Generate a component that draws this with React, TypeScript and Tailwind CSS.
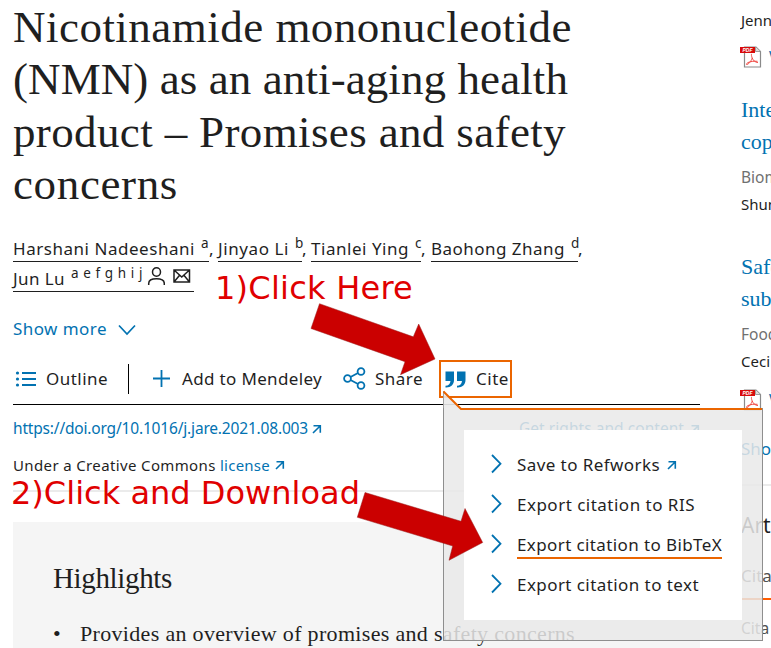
import { useLayoutEffect, useRef } from "react";
import type { ReactNode } from "react";

const SANS = "font-['Noto_Sans','Open_Sans',sans-serif]";
const SERIF = "font-['Liberation_Serif',serif]";

/** A run of text whose tracking is adjusted so that it fills a given measure. */
function Fit({ w, className = "", children }: { w: number; className?: string; children: string }) {
  const ref = useRef<HTMLSpanElement>(null);
  useLayoutEffect(() => {
    const el = ref.current;
    if (!el) return;
    el.style.letterSpacing = "0px";
    const natural = el.getBoundingClientRect().width;
    el.style.letterSpacing = `${(w - natural) / children.length}px`;
  }, [w, children]);
  return (
    <span ref={ref} className={`inline-block shrink-0 whitespace-pre ${className}`}>
      {children}
    </span>
  );
}

function ExternalArrow({ className = "" }: { className?: string }) {
  return (
    <svg className={`shrink-0 ${className}`} width="10" height="10" viewBox="0 0 10 10" fill="none" stroke="#0272b1" strokeWidth="1.6">
      <path d="M1.500 1.800H8.300V8.800M8.100 2L1 9" />
    </svg>
  );
}

function PdfIcon() {
  return (
    <svg className="-ml-px block shrink-0" width="22" height="22" viewBox="0 0 22 22">
      <path d="M4.5 1H16l4.5 4.5V21h-16z" fill="#fff" stroke="#8a8a8a" strokeWidth="1.2" />
      <path d="M15.5 1v4.5h5" fill="#ddd" stroke="#8a8a8a" strokeWidth=".8" />
      <path d="M12 8c-1 0-.6 2 .2 4 1 2.400 3 4.500 5.800 4.500M12.300 12C11 15.500 8 19 6.500 18.500 6 17 10 14.800 17.500 15.300" fill="none" stroke="#f04a44" strokeWidth="1" />
      <rect x="0" y="1" width="15" height="6" fill="#d80a0a" />
      <text x="7.5" y="6" textAnchor="middle" fill="#fff" className="font-['Liberation_Sans',sans-serif] text-[5px] font-bold italic">PDF</text>
    </svg>
  );
}

function Author({ name, w, sup, total, children }: { name: string; w: number; sup: string; total: string; children?: ReactNode }) {
  return (
    <span className={`flex h-[25px] shrink-0 border-b border-[#1f1f1f] ${total}`}>
      <Fit w={w}>{name}</Fit>
      <span className="ml-[6px] whitespace-pre text-[13.500px] leading-[12px]">{sup}</span>
      {children}
    </span>
  );
}

function ExportRow({ label, w, active, external }: { label: string; w: number; active?: boolean; external?: boolean }) {
  return (
    <li className="flex h-10 items-center">
      <svg className="shrink-0" width="11" height="20" viewBox="0 0 11 20" fill="none" stroke="#0272b1" strokeWidth="1.8">
        <path d="M1 1L9.500 9.700L1 18.500" />
      </svg>
      <span className={`ml-[15px] flex h-[29px] items-center ${active ? "border-b-2 border-[#eb6500] pt-[3px]" : "pt-[2px]"}`}>
        <Fit w={w}>{label}</Fit>
      </span>
      {external && <ExternalArrow className="ml-[7px] mt-[2px]" />}
    </li>
  );
}

function Article() {
  return (
    <main className="w-[687px] shrink-0 text-[17px] leading-6">
      <h1 className={`${SERIF} flex h-[210px] flex-col items-start pt-px text-[45px] leading-[52.400px]`}>
        <Fit w={559}>Nicotinamide mononucleotide</Fit>
        <Fit w={555}>(NMN) as an anti-aging health</Fit>
        <Fit w={553}>product – Promises and safety</Fit>
        <Fit w={165}>concerns</Fit>
      </h1>

      <div className="mt-[27px] flex">
        <Author name="Harshani Nadeeshani" w={182} sup="a" total="w-[196px]" />
        <span className="w-[9px]">,</span>
        <Author name="Jinyao Li" w={71} sup="b" total="w-[84px]" />
        <span className="w-[9px]">,</span>
        <Author name="Tianlei Ying" w={98} sup="c" total="w-[110px]" />
        <span className="w-[10px]">,</span>
        <Author name="Baohong Zhang" w={134} sup="d" total="w-[147px]" />
        <span>,</span>
      </div>
      <div className="mt-[5px] flex">
        <span className="flex h-[25px] w-[181px] border-b border-[#1f1f1f]">
          <Fit w={52}>Jun Lu</Fit>
          <Fit w={72} className="ml-[6px] text-[13.500px] leading-[12px]">a e f g h i j</Fit>
          <svg className="ml-[4px]" width="18" height="19" viewBox="0 0 18 19" fill="none" stroke="#1f1f1f" strokeWidth="1.500">
            <ellipse cx="9.500" cy="5" rx="4" ry="4.200" />
            <path d="M1.700 18v-1.500C1.700 13 5.500 11.800 9.500 11.800s7.800 1.200 7.800 4.700V18" />
          </svg>
          <svg className="ml-[8px] mt-[2px]" width="18" height="14" viewBox="0 0 18 14" fill="none" stroke="#1f1f1f" strokeWidth="1.500">
            <path d="M1 1h15.500v12H1zM1 1l7.750 7 7.750-7M1 13l5.600-6.800M16.500 13l-5.600-6.800" />
          </svg>
        </span>
      </div>

      <div className="mt-[25px] flex h-6 items-center text-[#0272b1]">
        <Fit w={94}>Show more</Fit>
        <svg className="ml-[11px] mt-px" width="18" height="12" viewBox="0 0 18 12" fill="none" stroke="currentColor" strokeWidth="1.700">
          <path d="M1 1.500L9 10l8-8.500" />
        </svg>
      </div>

      <div className="mt-[23px] flex h-[41px] border-b border-black">
        <div className="flex h-[30px] items-center">
          <svg className="ml-[2px]" width="22" height="16" viewBox="0 0 22 16" fill="#0272b1">
            <path d="M7 1h14v2H7zM7 7h14v2H7zM7 13h14v2H7z" />
            <circle cx="2.500" cy="2" r="1.600" />
            <circle cx="2.500" cy="8" r="1.600" />
            <circle cx="2.500" cy="14" r="1.600" />
          </svg>
          <Fit w={62} className="ml-[9px]">Outline</Fit>
          <span className="ml-5 h-[30px] w-px bg-black" />
          <svg className="ml-6" width="18" height="18" viewBox="0 0 18 18" stroke="#0272b1" strokeWidth="1.800">
            <path d="M0 8.500h17M8.500 0v17" />
          </svg>
          <Fit w={140} className="ml-[11px]">Add to Mendeley</Fit>
          <svg className="ml-[21px]" width="24" height="24" viewBox="0 0 24 24" fill="none" stroke="#0272b1" strokeWidth="1.800">
            <circle cx="4.500" cy="11.500" r="3.400" />
            <circle cx="18" cy="4.500" r="3.400" />
            <circle cx="18" cy="18.500" r="3.400" />
            <path d="M7.500 10l7.500-4M7.500 13l7.500 4" />
          </svg>
          <Fit w={48} className="ml-[8px]">Share</Fit>
          <div className="ml-4 flex h-[38px] w-[73px] shrink-0 items-center border-2 border-[#eb6500]">
            <svg className="ml-[4px]" width="21" height="17" viewBox="0 0 21 17" fill="#0272b1">
              <path d="M.5.500H9V9c0 4.500-3 7.500-7.800 7.500H.5v-1.800c3 0 4.700-1.600 5-4.700H.5zM12 .500h8.500V9c0 4.500-3 7.500-7.800 7.500H12v-1.800c3 0 4.700-1.600 5-4.700h-5z" />
            </svg>
            <Fit w={33} className="ml-[10px]">Cite</Fit>
          </div>
        </div>
      </div>

      <div className="mt-[11px] flex h-6 items-center justify-between text-[15.500px] text-[#0272b1]">
        <span className="flex items-center">
          <Fit w={295}>https://doi.org/10.1016/j.jare.2021.08.003</Fit>
          <ExternalArrow className="ml-[4px] mt-px" />
        </span>
        <span className="flex items-center">
          <Fit w={165}>Get rights and content</Fit>
          <ExternalArrow className="ml-[6px] mt-px" />
        </span>
      </div>
      <div className="mt-[13px] flex h-6 items-center text-[15px]">
        <Fit w={207}>Under a Creative Commons </Fit>
        <Fit w={50} className="text-[#0272b1]">license</Fit>
        <ExternalArrow className="ml-[5px]" />
      </div>
      <hr className="mt-[13px] h-[2px] border-0 bg-[#ebebeb]" />

      <section className={`${SERIF} mt-[30px] h-[150px] bg-[#f5f5f5] px-10 pt-[38px]`}>
        <h2 className="h-9 text-[29px] leading-9">
          <Fit w={119}>Highlights</Fit>
        </h2>
        <div className="mt-[22px] flex h-8 items-center text-[22px] leading-8">
          <span className="w-[27px]">•</span>
          <Fit w={495}>Provides an overview of promises and safety concerns</Fit>
        </div>
      </section>
    </main>
  );
}

function Sidebar() {
  const title = `${SERIF} h-8 text-[22px] leading-8 text-[#0272b1]`;
  return (
    <aside className="ml-10 w-[31px] shrink-0 overflow-hidden whitespace-nowrap pl-px text-[15.500px] leading-6">
      <p className="mt-2 h-6 text-[15px]">Jenn</p>
      <div className="mt-[14px] flex h-[22px] items-center text-[#0272b1]">
        <PdfIcon />
        <span className="ml-[7px]">V</span>
      </div>
      <p className={`mt-[26px] ${title}`}>Inte</p>
      <p className={title}>cop</p>
      <p className="mt-[7px] h-6 text-[#707070]">Biom</p>
      <p className="mt-[3px] h-6 text-[15px]">Shun</p>
      <p className={`mt-[35px] ${title}`}>Safe</p>
      <p className={title}>sub</p>
      <p className="mt-[7px] h-6 text-[#707070]">Food</p>
      <p className="mt-[3px] h-6 text-[15px]">Ceci</p>
      <div className="mt-4 flex h-[22px] items-center text-[#0272b1]">
        <PdfIcon />
        <span className="ml-[7px]">V</span>
      </div>
      <p className="mt-[26px] h-6 text-[17px] text-[#0272b1]">Sho</p>
      <hr className="mt-[23px] h-[2px] border-0 bg-[#ebebeb]" />
      <h2 className="mt-6 h-[30px] text-[21px] leading-[30px]">Art</h2>
      <p className="mt-6 h-6 text-[17px] text-[#505050]">Cita</p>
      <div className="mt-[10px] h-[2px] bg-[#ff5c00]" />
      <p className="mt-4 h-6 text-[#505050]">Cita</p>
    </aside>
  );
}

function CitePopover() {
  return (
    <div className="absolute left-[443px] top-[408px] h-[233px] w-[320px] border border-t-0 border-[#8e8e8e] bg-[#e9e9e9]/85 pl-5 pt-[22px]">
      <svg className="absolute -left-[1px] -top-[18px]" width="320" height="21" viewBox="0 0 320 21">
        <path d="M0 1v17h18z" fill="#e9e9e9" fillOpacity=".9" />
        <path d="M0 1v19" stroke="#8e8e8e" strokeWidth="1.600" />
        <path d="M.5 1.500L18 19H319" fill="none" stroke="#eb6500" strokeWidth="2" />
      </svg>
      <ul className="h-[190px] w-[278px] bg-white pl-[27px] pt-[14px] text-[17px]">
        <ExportRow label="Save to Refworks" w={143} external />
        <ExportRow label="Export citation to RIS" w={178} />
        <ExportRow label="Export citation to BibTeX" w={205} active />
        <ExportRow label="Export citation to text" w={182} />
      </ul>
    </div>
  );
}

function Annotations() {
  const note = "absolute font-['DejaVu_Sans',sans-serif] leading-10 text-[#e00000] text-[32px]";
  return (
    <>
      <div className={`${note} left-[215px] top-[268px]`}>
        <Fit w={198}>1)Click Here</Fit>
      </div>
      <div className={`${note} left-[11px] top-[473px]`}>
        <Fit w={349}>2)Click and Download</Fit>
      </div>
      <svg className="absolute left-0 top-0" width="771" height="648" viewBox="0 0 771 648" fill="#cb0000" stroke="#9b2020" strokeWidth=".5">
        <path d="M319.500 303.700L413.300 336.800L418.700 324L435 359L400.500 374.700L405 361.700L311 328.500Z" />
        <path d="M365 492.500L461 521.300L465 508.500L482.700 542.500L449 560.300L452.700 546L357.300 517.300Z" />
      </svg>
    </>
  );
}

export default function App() {
  return (
    <div className={`${SANS} relative flex h-[648px] w-[771px] overflow-hidden bg-white pl-[13px] text-[#1f1f1f]`}>
      <Article />
      <Sidebar />
      <CitePopover />
      <Annotations />
    </div>
  );
}
